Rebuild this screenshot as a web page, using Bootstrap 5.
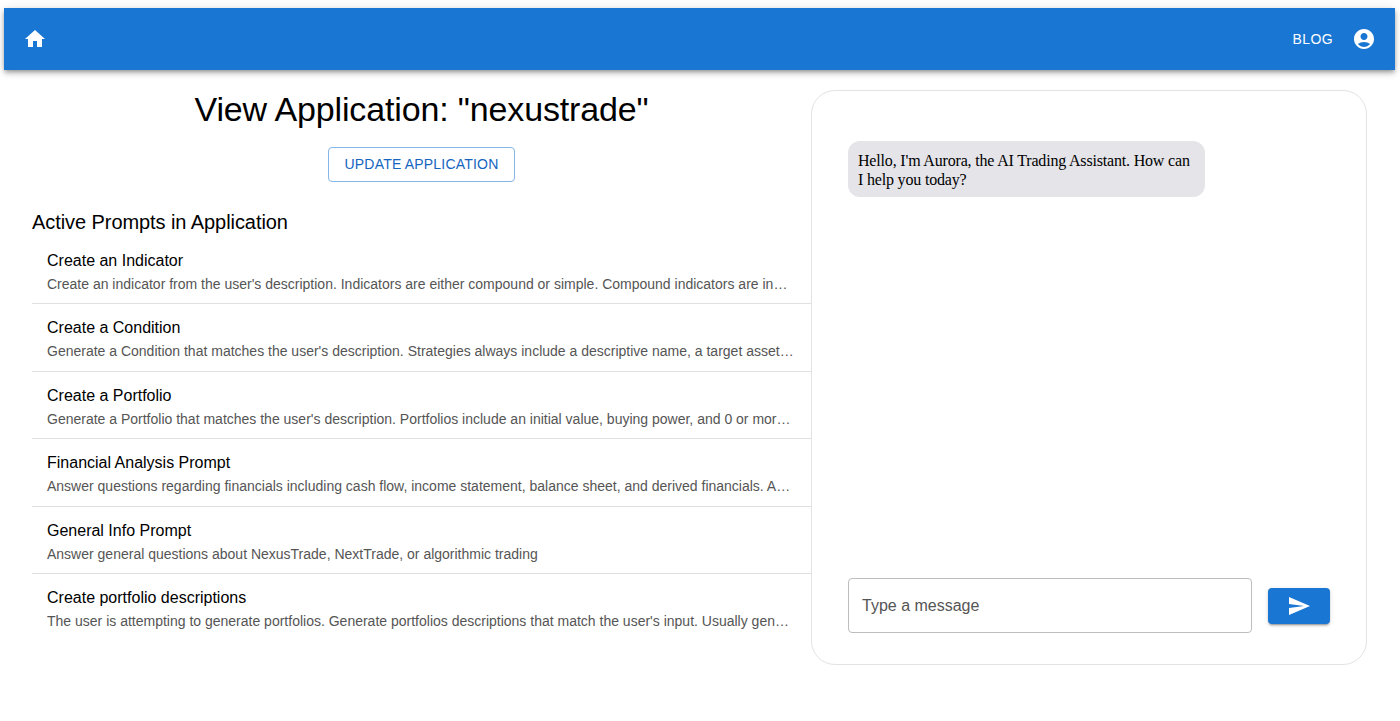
<!DOCTYPE html>
<html lang="en">
<head>
<meta charset="utf-8">
<title>View Application</title>
<link href="https://cdn.jsdelivr.net/npm/bootstrap@5.3.0/dist/css/bootstrap.min.css" rel="stylesheet">
<style>
html,body{height:721px;overflow:hidden}
body{background:#fff;font-family:"Liberation Sans",Arial,sans-serif;color:#000;padding:8px 5px 0 4px}
.app-bar{height:62px;background:#1976d2;box-shadow:0 2px 4px -1px rgba(0,0,0,.3),0 4px 5px rgba(0,0,0,.14),0 1px 10px rgba(0,0,0,.12);padding:0 19px}
.blog{font-size:14px;letter-spacing:.02857em;color:#fff;text-decoration:none}
.account{margin-left:19px}
.main{padding:20px 28px 0 28px}
.left{width:779px;flex:none}
.page-title{font-size:34px;line-height:38px;font-weight:400;margin:0;letter-spacing:-.14px}
.btn-update,.btn-update:hover{font-size:14px;letter-spacing:.2px;line-height:19px;padding:7px 15px;color:#1565c0;border:1px solid #85b5e6;border-radius:4px;background:#fff;margin-top:19px}
.section-title{font-size:20px;line-height:24px;font-weight:400;margin:28px 0 0;letter-spacing:-.07px}
.prompts{margin-top:2.5px}
.prompt{height:67.5px;border-bottom:1px solid #e0e0e0;padding:12px 15px 0;border-radius:0}
.prompt-title{font-size:16px;line-height:24px;color:#000}
.prompt-desc{font-size:14px;line-height:20px;color:#555;white-space:nowrap;overflow:hidden;text-overflow:ellipsis;margin-top:1px;max-width:748px}
.chat{width:556px;height:575px;flex:none;border:1px solid #e3e3e3;border-radius:24px;padding:50px 36px 31px}
.bubble{width:357px;background:#e4e4e9;border-radius:12px;padding:10px 13px 8px 10px;font-family:"Liberation Serif","Times New Roman",serif;font-size:16px;line-height:19px;letter-spacing:-.18px;color:#000}
.msg-input{width:404px;height:55px;border:1px solid #bdbdbd;border-radius:4px;padding:0 13px;font-size:16px;color:#555;display:flex;align-items:center}
.send{width:62px;height:36px;background:#1976d2;border:0;border-radius:4px;box-shadow:0 3px 1px -2px rgba(0,0,0,.2),0 2px 2px rgba(0,0,0,.14),0 1px 5px rgba(0,0,0,.12);padding:0}
</style>
</head>
<body>
<nav class="app-bar d-flex align-items-center justify-content-between">
  <svg width="24" height="24" viewBox="0 0 24 24" fill="#fff" aria-label="Home"><path d="M10 20v-6h4v6h5v-8h3L12 3 2 12h3v8z"/></svg>
  <div class="d-flex align-items-center">
    <a class="blog" href="#">BLOG</a>
    <svg class="account" width="24" height="24" viewBox="0 0 24 24" fill="#fff" aria-label="Account"><path d="M12 2C6.48 2 2 6.48 2 12s4.48 10 10 10 10-4.48 10-10S17.52 2 12 2zm0 4c1.93 0 3.5 1.57 3.5 3.5S13.93 13 12 13s-3.5-1.57-3.5-3.5S10.07 6 12 6zm0 14c-2.03 0-4.43-.82-6.14-2.88C7.55 15.8 9.68 15 12 15s4.45.8 6.14 2.12C16.43 19.18 14.03 20 12 20z"/></svg>
  </div>
</nav>
<main class="main d-flex">
  <section class="left">
    <div class="text-center">
      <h1 class="page-title">View Application: "nexustrade"</h1>
      <button type="button" class="btn btn-update">UPDATE APPLICATION</button>
    </div>
    <h2 class="section-title">Active Prompts in Application</h2>
    <div class="prompts list-group list-group-flush">
      <div class="prompt list-group-item"><div class="prompt-title">Create an Indicator</div><div class="prompt-desc">Create an indicator from the user's description. Indicators are either compound or simple. Compound indicators are indicators that combine other indicators</div></div>
      <div class="prompt list-group-item"><div class="prompt-title">Create a Condition</div><div class="prompt-desc">Generate a Condition that matches the user's description. Strategies always include a descriptive name, a target asset, and a condition</div></div>
      <div class="prompt list-group-item"><div class="prompt-title">Create a Portfolio</div><div class="prompt-desc">Generate a Portfolio that matches the user's description. Portfolios include an initial value, buying power, and 0 or more positions and strategies</div></div>
      <div class="prompt list-group-item"><div class="prompt-title">Financial Analysis Prompt</div><div class="prompt-desc">Answer questions regarding financials including cash flow, income statement, balance sheet, and derived financials. Answers include the data</div></div>
      <div class="prompt list-group-item"><div class="prompt-title">General Info Prompt</div><div class="prompt-desc">Answer general questions about NexusTrade, NextTrade, or algorithmic trading</div></div>
      <div class="prompt list-group-item"><div class="prompt-title">Create portfolio descriptions</div><div class="prompt-desc">The user is attempting to generate portfolios. Generate portfolios descriptions that match the user's input. Usually generates several descriptions</div></div>
    </div>
  </section>
  <aside class="chat d-flex flex-column justify-content-between">
    <div class="bubble">Hello, I'm Aurora, the AI Trading Assistant. How can I help you today?</div>
    <div class="d-flex align-items-center justify-content-between">
      <div class="msg-input">Type a message</div>
      <button type="button" class="send d-flex align-items-center justify-content-center" aria-label="Send">
        <svg width="24" height="24" viewBox="0 0 24 24" fill="#fff"><path d="M2.01 21 23 12 2.01 3 2 10l15 2-15 2z"/></svg>
      </button>
    </div>
  </aside>
</main>
<script src="https://cdn.jsdelivr.net/npm/bootstrap@5.3.0/dist/js/bootstrap.bundle.min.js"></script>
</body>
</html>
